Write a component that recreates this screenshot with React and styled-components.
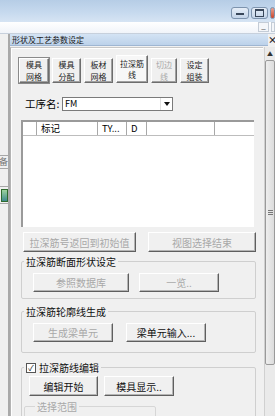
import React from 'react';
import styled, { createGlobalStyle } from 'styled-components';

const GlobalStyle = createGlobalStyle`
  html, body { margin: 0; padding: 0; background: #f0f0f0; }
  body {
    font-family: "Noto Sans CJK SC", "Liberation Sans", sans-serif;
    font-size: 10px;
    color: #000;
  }
`;

const Screen = styled.div`
  width: 275px;
  height: 416px;
  overflow: hidden;
  display: flex;
  flex-direction: column;
  background: #f0f0f0;
`;

const TitleBar = styled.div`
  height: 22px;
  flex: none;
  display: flex;
  justify-content: flex-end;
  align-items: flex-start;
  padding-top: 7px;
  box-sizing: border-box;
  background: linear-gradient(#b6cde6, #c6d9ee 55%, #d6e4f3);
  gap: 2px;
`;

const WinButton = styled.div`
  width: ${p => p.$w}px;
  height: 12px;
  box-sizing: border-box;
  border: 1px solid #7d93ad;
  border-radius: 3px;
  background: ${p => p.$close ? 'linear-gradient(#e8a293, #c9462c)' : 'linear-gradient(#e6eef7, #c3d4e8)'};
  display: flex;
  align-items: center;
  justify-content: center;
  flex: none;
`;

const MinGlyph = styled.div`
  width: 8px;
  height: 2px;
  margin-top: 2px;
  background: #39475a;
`;

const MaxGlyph = styled.div`
  width: 7px;
  height: 5px;
  border: 1px solid #39475a;
  border-top-width: 2px;
`;

const MenuBand = styled.div`
  height: 11px;
  flex: none;
  display: flex;
  justify-content: flex-end;
  align-items: flex-start;
  gap: 2px;
  background: linear-gradient(#ffffff, #f1f4f9);
  border-bottom: 1px solid #c7d0dc;
`;

const MiniButton = styled.div`
  width: ${p => p.$w || 11}px;
  height: 10px;
  box-sizing: border-box;
  border: 1px solid #c4ccd6;
  background: #f4f6f9;
  font-size: 8px;
  line-height: 6px;
  text-align: center;
  color: #333;
  flex: none;
`;

const Body = styled.div`
  flex: 1;
  display: flex;
  min-height: 0;
`;

const LeftStrip = styled.div`
  width: 8px;
  flex: none;
  border-right: 2px solid #a9a9a9;
  background: #f0f0f0;
  display: flex;
  flex-direction: column;
`;

const StripPiece = styled.div`
  height: ${p => p.$h}px;
  margin-top: ${p => p.$top}px;
  flex: none;
  border-top: 1px solid #a8a8a8;
  border-bottom: 1px solid #a8a8a8;
  display: flex;
  justify-content: flex-end;
  align-items: center;
  overflow: hidden;
  font-size: 9px;
  line-height: 12px;
  color: #777;
  white-space: nowrap;
`;

const StripIcon = styled.div`
  width: 5px;
  height: 11px;
  flex: none;
  border: 1px solid #2f6b2f;
  background: linear-gradient(#9ed39e, #3e8a8e);
`;

const Panel = styled.div`
  flex: 1;
  display: flex;
  flex-direction: column;
  min-width: 0;
`;

const PanelHeader = styled.div`
  height: 11px;
  flex: none;
  display: flex;
  align-items: center;
`;

const PanelTitle = styled.div`
  flex: 1;
  height: 11px;
  background: linear-gradient(#d4e3f4, #bcd2ea);
  border-bottom: 1px solid #9fb6d2;
  font-size: 8px;
  line-height: 11px;
  padding-left: 2px;
  color: #1a1a1a;
  white-space: nowrap;
`;

const CloseX = styled.div`
  width: 7px;
  flex: none;
  font-size: 9px;
  font-weight: bold;
  text-align: center;
  line-height: 11px;
  color: #222;
`;

const PanelBody = styled.div`
  flex: 1;
  display: flex;
  min-height: 0;
  padding-top: 2px;
`;

const Content = styled.div`
  flex: 1;
  min-width: 0;
  border-left: 1px solid #b4b4b4;
  border-top: 1px solid #c8c8c8;
  box-shadow: inset 1px 1px 0 #ffffff;
  padding: 7px 8px 0 9px;
  display: flex;
  flex-direction: column;
  overflow: hidden;
  & > * { flex-shrink: 0; }
`;

const Scrollbar = styled.div`
  width: 10px;
  flex: none;
  margin-left: 1px;
  display: flex;
  flex-direction: column;
  background: #eaeaea;
  border-left: 1px solid #d0d0d0;
`;

const ScrollArrow = styled.div`
  height: 12px;
  font-size: 6px;
  line-height: 14px;
  text-align: center;
  color: #333;
`;

const ScrollThumb = styled.div`
  height: 305px;
  margin-top: 1px;
  box-sizing: border-box;
  border: 1px solid #9a9a9a;
  border-radius: 2px;
  background: linear-gradient(90deg, #eeeeee, #dcdcdc);
  display: flex;
  align-items: center;
  justify-content: center;
`;

const Grip = styled.div`
  width: 5px;
  height: 5px;
  background: repeating-linear-gradient(#777 0 1px, transparent 1px 2px);
`;

const TabRow = styled.div`
  display: flex;
  align-items: flex-end;
  gap: 3px;
  margin-left: -1px;
  height: 28px;
`;

const TabButton = styled.div`
  width: ${p => p.$w}px;
  height: ${p => p.$active ? 28 : 25}px;
  box-sizing: border-box;
  border: 1px solid;
  border-color: #ffffff #6d6d6d #6d6d6d #ffffff;
  box-shadow: inset -1px -1px 0 #a0a0a0, ${p => p.$focus ? '0 0 0 1px #8a8a8a' : '0 0 0 0 transparent'};
  background: ${p => p.$active ? '#f7f7f7' : '#f0f0f0'};
  display: flex;
  flex-direction: column;
  align-items: center;
  justify-content: center;
  text-align: center;
  font-size: 8px;
  line-height: 11.5px;
  color: ${p => p.$disabled ? '#a8a8a8' : '#222'};
`;

const FieldRow = styled.div`
  display: flex;
  align-items: center;
  margin-top: 14px;
  margin-left: 5px;
  height: 14px;
`;

const FieldLabel = styled.span`
  font-size: 10.5px;
  line-height: 14px;
  width: 37px;
  white-space: nowrap;
`;

const Combo = styled.div`
  width: 111px;
  height: 14px;
  box-sizing: border-box;
  border: 1px solid #7a7a7a;
  background: #fff;
  display: flex;
  align-items: center;
  font-size: 9px;
  line-height: 12px;
  padding-left: 2px;
`;

const ComboText = styled.span`
  flex: 1;
`;

const ComboArrow = styled.div`
  width: 11px;
  height: 12px;
  border-left: 1px solid #e0e0e0;
  display: flex;
  align-items: center;
  justify-content: center;
`;

const Triangle = styled.div`
  width: 0;
  height: 0;
  border-left: 3px solid transparent;
  border-right: 3px solid transparent;
  border-top: 4px solid #111;
`;

const Table = styled.div`
  margin-top: 9px;
  margin-left: 1px;
  width: 233px;
  height: 107px;
  box-sizing: border-box;
  border-left: 2px solid #9a9a9a;
  border-top: 2px solid #9a9a9a;
  background: #fff;
`;

const HeaderRow = styled.div`
  display: flex;
  height: 13px;
  border-bottom: 1px solid #bdbdbd;
`;

const HeaderCell = styled.div`
  width: ${p => p.$w}px;
  flex: none;
  box-sizing: border-box;
  border-right: ${p => p.$last ? 'none' : '1px solid #a8a8a8'};
  font-size: 9.5px;
  line-height: 13px;
  padding-left: 4px;
  white-space: nowrap;
  overflow: hidden;
`;

const Btn = styled.div`
  width: ${p => p.$w}px;
  height: ${p => p.$h || 19}px;
  box-sizing: border-box;
  flex: none;
  border: 1px solid;
  border-color: #ffffff #5f5f5f #5f5f5f #ffffff;
  box-shadow: inset -1px -1px 0 #b4b4b4;
  background: #f0f0f0;
  display: flex;
  align-items: center;
  justify-content: center;
  font-size: 10px;
  line-height: 13px;
  white-space: nowrap;
  color: ${p => p.$disabled ? '#a8a8a8' : '#111'};
`;

const BtnRow = styled.div`
  display: flex;
  gap: ${p => p.$gap}px;
  margin-left: ${p => p.$left}px;
  margin-top: ${p => p.$top || 0}px;
`;

const Group = styled.fieldset`
  margin: ${p => p.$top}px 0 0 1px;
  width: 235px;
  box-sizing: border-box;
  border: 1px solid #cfcfcf;
  border-radius: 2px;
  padding: ${p => p.$pt}px 0 ${p => p.$pb}px 0;
  min-width: 0;
`;

const Legend = styled.legend`
  padding: 0 2px;
  margin-left: 2px;
  font-size: 10px;
  line-height: 13px;
  color: ${p => p.$disabled ? '#a8a8a8' : '#111'};
  display: flex;
  align-items: center;
  gap: 3px;
`;

const CheckBox = styled.span`
  width: 8px;
  height: 8px;
  border: 1px solid #555;
  background: #fff;
  display: inline-flex;
  align-items: center;
  justify-content: center;
  font-size: 8px;
  line-height: 8px;
`;

const SubGroup = styled.fieldset`
  margin: 4px 0 0 2px;
  width: 132px;
  box-sizing: border-box;
  border: 1px solid #d6d6d6;
  border-radius: 2px;
  padding: 1px 0 4px 8px;
  min-width: 0;
`;

const RadioRow = styled.div`
  display: flex;
  gap: 10px;
  font-size: 10px;
  line-height: 13px;
  color: #a8a8a8;
`;

const Radio = styled.span`
  display: inline-flex;
  align-items: center;
  gap: 3px;
  &::before {
    content: '';
    width: 7px;
    height: 7px;
    border-radius: 50%;
    border: 1px solid #b0b0b0;
    background: radial-gradient(#a8a8a8 0 2px, #fff 2px);
  }
`;

const tabs = [
  { w: 30, t: ['模具', '网格'], focus: true },
  { w: 29, t: ['模具', '分配'] },
  { w: 29, t: ['板材', '网格'] },
  { w: 32, t: ['拉深筋', '线'], active: true },
  { w: 26, t: ['切边', '线'], disabled: true },
  { w: 29, t: ['设定', '组装'] },
];

const columns = [
  { w: 14, t: '' },
  { w: 61, t: '标记' },
  { w: 29, t: 'TY...' },
  { w: 20, t: 'D' },
  { w: 68, t: '' },
  { w: 39, t: '', last: true },
];

export default function App() {
  return (
    <Screen>
      <GlobalStyle />
      <TitleBar>
        <WinButton $w={18}><MinGlyph /></WinButton>
        <WinButton $w={17}><MaxGlyph /></WinButton>
        <WinButton $w={5} $close />
      </TitleBar>
      <MenuBand>
        <MiniButton>_</MiniButton>
        <MiniButton $w={4} />
      </MenuBand>
      <Body>
        <LeftStrip>
          <StripPiece $top={121} $h={12}>准备</StripPiece>
          <StripPiece $top={17} $h={16}><StripIcon /></StripPiece>
        </LeftStrip>
        <Panel>
          <PanelHeader>
            <PanelTitle>形状及工艺参数设定</PanelTitle>
            <CloseX>×</CloseX>
          </PanelHeader>
          <PanelBody>
            <Content>
              <TabRow>
                {tabs.map((tab, i) => (
                  <TabButton key={i} $w={tab.w} $active={tab.active} $disabled={tab.disabled} $focus={tab.focus}>
                    <span>{tab.t[0]}</span>
                    <span>{tab.t[1]}</span>
                  </TabButton>
                ))}
              </TabRow>
              <FieldRow>
                <FieldLabel>工序名:</FieldLabel>
                <Combo>
                  <ComboText>FM</ComboText>
                  <ComboArrow><Triangle /></ComboArrow>
                </Combo>
              </FieldRow>
              <Table>
                <HeaderRow>
                  {columns.map((c, i) => (
                    <HeaderCell key={i} $w={c.w} $last={c.last}>{c.t}</HeaderCell>
                  ))}
                </HeaderRow>
              </Table>
              <BtnRow $gap={12} $left={3} $top={5}>
                <Btn $w={113} $h={20} $disabled>拉深筋号返回到初始值</Btn>
                <Btn $w={108} $h={20} $disabled>视图选择结束</Btn>
              </BtnRow>
              <Group $top={3} $pt={5} $pb={6}>
                <Legend>拉深筋断面形状设定</Legend>
                <BtnRow $gap={10} $left={11}>
                  <Btn $w={96} $disabled>参照数据库</Btn>
                  <Btn $w={80} $disabled>一览..</Btn>
                </BtnRow>
              </Group>
              <Group $top={6} $pt={5} $pb={10}>
                <Legend>拉深筋轮廓线生成</Legend>
                <BtnRow $gap={13} $left={11}>
                  <Btn $w={80} $disabled>生成梁单元</Btn>
                  <Btn $w={80}>梁单元输入...</Btn>
                </BtnRow>
              </Group>
              <Group $top={8} $pt={2} $pb={4}>
                <Legend><CheckBox>✓</CheckBox>拉深筋线编辑</Legend>
                <BtnRow $gap={6} $left={7}>
                  <Btn $w={69} $h={20}>编辑开始</Btn>
                  <Btn $w={70} $h={20}>模具显示..</Btn>
                </BtnRow>
                <SubGroup>
                  <Legend $disabled>选择范围</Legend>
                  <RadioRow>
                    <Radio>视图</Radio>
                    <Radio>梁单元</Radio>
                  </RadioRow>
                </SubGroup>
              </Group>
            </Content>
            <Scrollbar>
              <ScrollArrow>▲</ScrollArrow>
              <ScrollThumb><Grip /></ScrollThumb>
            </Scrollbar>
          </PanelBody>
        </Panel>
      </Body>
    </Screen>
  );
}
